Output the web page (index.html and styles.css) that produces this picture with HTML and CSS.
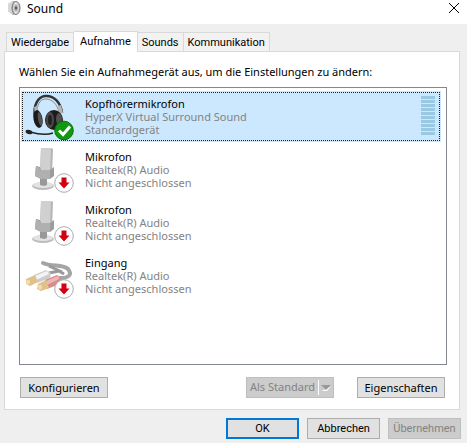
FILE: index.html
```html
<!DOCTYPE html>
<html lang="de">
<head>
    <meta charset="UTF-8">
    <meta name="viewport" content="width=device-width, initial-scale=1">
    <title>Sound</title>
    <link rel="stylesheet" href="styles.css">
</head>
<body>
<!-- Shared drawings -->
<svg class="defs" width="0" height="0" aria-hidden="true">
    <defs>
        <linearGradient id="metal" x1="0" x2="1">
            <stop offset="0" stop-color="#999"/>
            <stop offset="0.45" stop-color="#eee"/>
            <stop offset="1" stop-color="#aaa"/>
        </linearGradient>
    </defs>
    <symbol id="unplugged" viewBox="0 0 20 20">
        <circle cx="10" cy="10" r="9.300" fill="#fff" stroke="#aaa"/>
        <path d="M7.500 4.500h5v5h3L10 15.500 4.500 9.500h3z" fill="#d4000f"/>
    </symbol>
    <symbol id="mic" viewBox="0 0 48 48">
        <ellipse cx="18" cy="40" rx="11" ry="4" fill="#bdbdbd"/>
        <ellipse cx="18" cy="39" rx="10" ry="3" fill="#e2e2e2"/>
        <path d="M15 31h7v8l-3 1-4-1z" fill="#999"/>
        <path d="M16 2h10l2 1-1 25-12-2z" fill="#b5b5b5"/>
        <path d="M16 2h10l-1 26-10-2z" fill="#d0d0d0"/>
        <path d="M11 20l4 1 1 3h9l4-3v9l-4 3h-9l-6-3z" fill="#9c9c9c"/>
        <path d="M11 20l3 1 1 3h10v9h-9l-6-3z" fill="#b0b0b0"/>
    </symbol>
</svg>

<div class="window">
    <header class="titlebar">
        <svg class="app-icon" viewBox="0 0 14 16" aria-hidden="true">
            <path d="M1 4l5-3 4 1v12l-4 1-5-4z" fill="#aaa"/>
            <path d="M1 4l5-3v13l-5-3z" fill="#d8d8d8"/>
            <ellipse cx="9" cy="8" rx="4" ry="6.500" fill="url(#metal)" stroke="#777"/>
            <ellipse cx="9" cy="8" rx="2.500" ry="4" fill="#aaa" stroke="#ddd"/>
            <circle cx="9" cy="8" r="1.200" fill="#555"/>
        </svg>
        <h1>Sound</h1>
        <button class="close" aria-label="Schließen">
            <svg viewBox="0 0 10 10" aria-hidden="true"><path d="M0 0l10 10M10 0L0 10" stroke="#000" fill="none"/></svg>
        </button>
    </header>

    <main>
        <nav class="tabs">
            <button class="tab">Wiedergabe</button>
            <button class="tab active">Aufnahme</button>
            <button class="tab">Sounds</button>
            <button class="tab">Kommunikation</button>
        </nav>

        <section class="panel">
            <p class="hint">Wählen Sie ein Aufnahmegerät aus, um die Einstellungen zu ändern:</p>

            <ul class="devices">
                <li class="device selected">
                    <svg class="device-icon" viewBox="0 0 48 48" aria-hidden="true">
                        <path d="M10 24C8 12 13 4 20 3c9-1 16 7 17 17" fill="none" stroke="#333" stroke-width="2.500"/>
                        <path d="M12 18C13 9 16 6 21 6c6 0 11 5 13 13" fill="none" stroke="#888"/>
                        <path d="M9 14l3-1 1 7-3 1zM33 13l3-1 2 8-4 1z" fill="#b5b5b5"/>
                        <ellipse cx="13" cy="26" rx="4.500" ry="9" fill="#1b1b1b" transform="rotate(-10 13 26)"/>
                        <ellipse cx="15" cy="26" rx="2" ry="7" fill="#555" transform="rotate(-10 15 26)"/>
                        <ellipse cx="29" cy="27" rx="9" ry="10" fill="#1b1b1b"/>
                        <ellipse cx="25" cy="27" rx="4" ry="8" fill="#4a4a4a"/>
                        <ellipse cx="25" cy="27" rx="2" ry="5" fill="#222"/>
                        <ellipse cx="34" cy="26" rx="3" ry="6" fill="#505050"/>
                        <path d="M28 40c-8 3-16 1-23-1" fill="none" stroke="#222" stroke-width="1.500"/>
                        <ellipse cx="4" cy="39" rx="3.500" ry="2" fill="#222" transform="rotate(18 4 39)"/>
                        <circle cx="39" cy="37.500" r="9.300" fill="#109910" stroke="#087008"/>
                        <path d="M34 37.500l4 4 7-8" fill="none" stroke="#fff" stroke-width="3"/>
                    </svg>
                    <div class="info">
                        <span class="name">Kopfhörermikrofon</span>
                        <span>HyperX Virtual Surround Sound</span>
                        <span>Standardgerät</span>
                    </div>
                    <div class="meter">
                        <i></i><i></i><i></i><i></i><i></i><i></i><i></i><i></i><i></i><i></i>
                    </div>
                </li>
                <li class="device">
                    <svg class="device-icon" viewBox="0 0 48 48" aria-hidden="true">
                        <use href="#mic" width="48" height="48"/>
                        <use href="#unplugged" x="29" y="27" width="20" height="20"/>
                    </svg>
                    <div class="info">
                        <span class="name">Mikrofon</span>
                        <span>Realtek(R) Audio</span>
                        <span>Nicht angeschlossen</span>
                    </div>
                </li>
                <li class="device">
                    <svg class="device-icon" viewBox="0 0 48 48" aria-hidden="true">
                        <use href="#mic" width="48" height="48"/>
                        <use href="#unplugged" x="29" y="27" width="20" height="20"/>
                    </svg>
                    <div class="info">
                        <span class="name">Mikrofon</span>
                        <span>Realtek(R) Audio</span>
                        <span>Nicht angeschlossen</span>
                    </div>
                </li>
                <li class="device">
                    <svg class="device-icon" viewBox="0 0 48 48" aria-hidden="true">
                        <path d="M18 11c9 4 20 1 25 6 4 5 2 9-8 9" fill="none" stroke="#a5a5a5" stroke-width="4" stroke-linecap="round"/>
                        <path d="M24 14l13 6M24 21l10-2 5 3" fill="none" stroke="#999" stroke-width="3"/>
                        <path d="M9 23l12-5 5 3-1 5-13 5z" fill="#ccc"/>
                        <path d="M10 24l12-5 2 3-13 6z" fill="#f4f4f4"/>
                        <path d="M1 27l9-4 3 7-8 4-4-2z" fill="#dfc18c"/>
                        <ellipse cx="3" cy="30" rx="2" ry="2.500" fill="#f0dfad"/>
                        <path d="M20 28l12-5 4 3-1 6-13 5z" fill="#d68e8b"/>
                        <path d="M21 29l12-5 1 3-12 6z" fill="#edb8b3"/>
                        <path d="M13 32l8-4 3 8-8 3-4-2z" fill="#dfc18c"/>
                        <ellipse cx="15" cy="35" rx="2" ry="2.500" fill="#f0dfad"/>
                        <use href="#unplugged" x="29" y="27" width="20" height="20"/>
                    </svg>
                    <div class="info">
                        <span class="name">Eingang</span>
                        <span>Realtek(R) Audio</span>
                        <span>Nicht angeschlossen</span>
                    </div>
                </li>
            </ul>

            <div class="actions">
                <button class="btn wide">Konfigurieren</button>
                <button class="btn wide split" disabled>
                    <span>Als Standard</span>
                    <svg viewBox="0 0 10 6" aria-hidden="true"><path d="M1 6h5l4-5z" fill="#fff"/><path d="M0 0h10L5 5z" fill="#999"/></svg>
                </button>
                <button class="btn wide">Eigenschaften</button>
            </div>
        </section>
    </main>

    <footer class="dialog-buttons">
        <button class="btn default">OK</button>
        <button class="btn">Abbrechen</button>
        <button class="btn" disabled>Übernehmen</button>
    </footer>
</div>
</body>
</html>
```
FILE: styles.css
```css
:root {
    --face: #efefef;
    --line: #d9d9d9;
    --list-border: #828790;
    --accent: #0078d7;
}

* {
    box-sizing: border-box;
}

body {
    margin: 0;
    background-color: var(--face);
    color: #000;
    font-family: "Noto Sans", "Open Sans", sans-serif;
    font-size: 11px;
    line-height: 13px;
}

button {
    font: inherit;
    color: inherit;
}

.defs {
    position: absolute;
}

/* Title bar */
.titlebar {
    display: flex;
    align-items: flex-start;
    height: 24px;
    padding: 0 8px 0 7px;
    background-color: #fff;
}

.app-icon {
    width: 14px;
    height: 16px;
}

.titlebar h1 {
    margin: 0 auto 0 6px;
    font-size: 12px;
    font-weight: normal;
    line-height: 18px;
}

.close {
    display: flex;
    padding: 3px 0;
    border: none;
    background: none;
}

.close svg {
    width: 10px;
    height: 10px;
}

/* Tabs */
main {
    padding: 7px 7px 0 4px;
}

.tabs {
    display: flex;
    align-items: flex-end;
    padding-left: 2px;
}

.tab,
.dialog-buttons .btn {
    font-family: Roboto, sans-serif;
}

.tab {
    height: 19px;
    padding: 1px 4px 0;
    border: 1px solid var(--line);
    border-bottom: none;
    background-color: #f2f2f2;
}

.tab + .tab {
    border-left: none;
}

.tab.active {
    height: 21px;
    margin-bottom: -1px;
    padding: 0 6px 2px;
    background-color: #fff;
}

.panel {
    padding: 13px 12px 11px 14px;
    border: 1px solid var(--line);
    background-color: #fff;
}

.hint {
    margin: 0 0 9px;
}

/* Device list */
.devices {
    display: flex;
    flex-direction: column;
    gap: 2px;
    min-height: 278px;
    margin: 0 0 12px;
    padding: 3px 5px 3px 1px;
    border: 1px solid var(--list-border);
    list-style: none;
}

.device {
    display: flex;
    align-items: flex-start;
    height: 51px;
    padding: 2px 6px 0 4px;
}

.device.selected {
    background-color: #cce8ff;
    outline: 1px dotted #222;
    outline-offset: -2px;
}

.device-icon {
    flex: none;
    width: 48px;
    height: 48px;
    overflow: visible;
}

.info {
    display: flex;
    flex: 1;
    flex-direction: column;
    padding: 4px 0 0 12px;
    color: #838383;
}

.name {
    color: #000;
}

.meter {
    display: flex;
    flex-direction: column;
    gap: 1px;
    padding-top: 3px;
}

.meter i {
    width: 14px;
    height: 3px;
    background-color: #99c9e2;
}

/* Buttons */
.btn {
    width: 73px;
    height: 21px;
    padding: 0;
    border: 1px solid #adadad;
    background-color: #e1e1e1;
}

.btn.wide {
    width: 88px;
}

.btn.default {
    border: 2px solid var(--accent);
}

.btn:disabled {
    border-color: #bfbfbf;
    background-color: #ccc;
    color: #838383;
}

.actions {
    display: flex;
    padding-left: 1px;
    padding-right: 2px;
}

.split {
    display: flex;
    align-items: center;
    justify-content: space-between;
    margin: 0 23px 0 auto;
}

.split span {
    flex: 1;
    height: 15px;
    border-right: 1px solid #fff;
}

.split svg {
    width: 10px;
    height: 6px;
    margin: 0 2px;
}

.dialog-buttons {
    display: flex;
    justify-content: flex-end;
    gap: 8px;
    padding: 8px 6px 4px;
}
```
